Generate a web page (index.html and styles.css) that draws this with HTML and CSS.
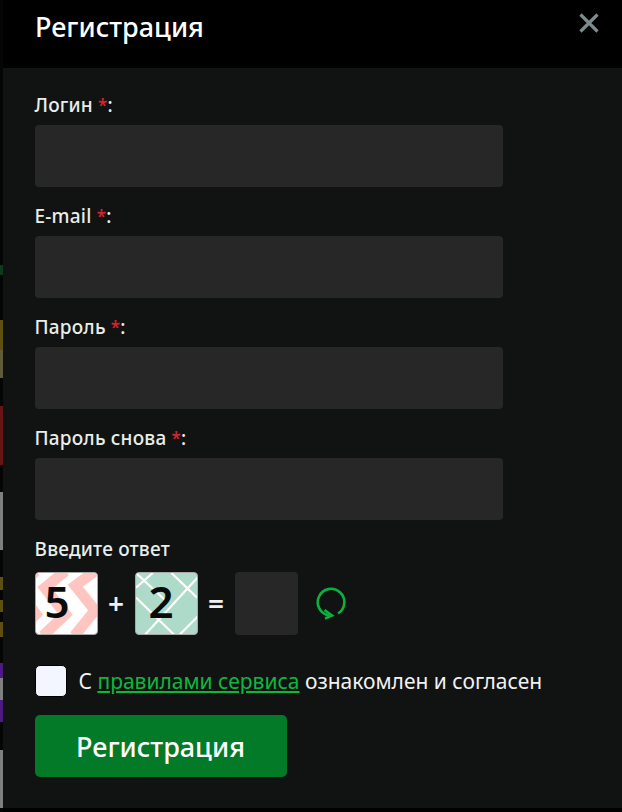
FILE: index.html
```html
<!DOCTYPE html>
<html lang="ru">
<head>
<meta charset="utf-8">
<title>Регистрация</title>
<link rel="stylesheet" href="styles.css">
</head>
<body>
<div class="page">
  <div class="strip">
    <i class="seg h265"></i><i class="seg h10 green"></i><i class="seg h45"></i><i class="seg h30 yellow"></i><i class="seg h28 gray-dim"></i><i class="seg h28"></i><i class="seg h59 red"></i><i class="seg h27"></i><i class="seg h58 gray"></i><i class="seg h27"></i><i class="seg h13 yellow"></i><i class="seg h10"></i><i class="seg h12 yellow"></i><i class="seg h10"></i><i class="seg h15 yellow"></i><i class="seg h26"></i><i class="seg h15 purple"></i><i class="seg h22 gray"></i><i class="seg h22 purple"></i><i class="seg h28"></i><i class="seg h58 gray"></i>
  </div>
  <div class="modal">
    <header class="head">
      <h1 class="title">Регистрация</h1>
      <svg class="close" viewBox="0 0 20 20" width="20" height="20"><path d="M1.500 1.500 18.500 18.500M18.500 1.500 1.500 18.500" stroke="#7d8b8d" stroke-width="3.200" fill="none"/></svg>
    </header>
    <form class="form">
      <div class="field"><label class="label">Логин <b class="req">*</b>:</label><div class="input"></div></div>
      <div class="field"><label class="label">E-mail <b class="req">*</b>:</label><div class="input"></div></div>
      <div class="field"><label class="label">Пароль <b class="req">*</b>:</label><div class="input"></div></div>
      <div class="field"><label class="label">Пароль снова <b class="req">*</b>:</label><div class="input"></div></div>
      <div class="label">Введите ответ</div>
      <div class="captcha">
        <div class="tile pink">
          <svg class="pat" viewBox="0 0 62 62"><path d="M60-2 40 13 60 38 39 64M30-2 9 15 30 42 7 64M0-2-20 15 0 42-22 64" fill="none" stroke="#ffc6c1" stroke-width="11"/></svg>
          <span class="digit shift-5">5</span>
        </div>
        <span class="op">+</span>
        <div class="tile mint">
          <svg class="pat" viewBox="0 0 62 62"><path d="M36 0 62 25M64 3 8 64M0 25 40 64M17 0 0 15M0 0 30 28M64 43 43 64" fill="none" stroke="#fff" stroke-width="2.200"/></svg>
          <span class="digit shift-2">2</span>
        </div>
        <span class="op">=</span>
        <div class="answer"></div>
        <svg class="reload" viewBox="0 0 32 34" width="32" height="34"><path d="M23 27.500A13.300 13.300 0 1 0 14 29.300" fill="none" stroke="#0bb13f" stroke-width="2.600"/><path d="M9.500 24 17 29.500 10 32.500" fill="none" stroke="#0bb13f" stroke-width="2.600"/></svg>
      </div>
      <div class="agree">
        <span class="check"></span>
        <span class="agree-text">С <a class="link" href="#">правилами сервиса</a> ознакомлен и согласен</span>
      </div>
      <button class="submit" type="button">Регистрация</button>
    </form>
  </div>
</div>
</body>
</html>
```
FILE: styles.css
```css
* { box-sizing: border-box; }
html, body { margin: 0; height: 100%; background: #000; }
body { font-family: "Noto Sans", "Open Sans", sans-serif; color: #f2f2f2; overflow: hidden; }
.page { display: flex; width: 622px; height: 812px; }

.strip { width: 3px; flex: none; display: flex; flex-direction: column; background: #050505; }
.seg { display: block; flex: none; }
.h10 { height: 10px; } .h12 { height: 12px; } .h13 { height: 13px; } .h15 { height: 15px; }
.h22 { height: 22px; } .h26 { height: 26px; } .h27 { height: 27px; } .h28 { height: 28px; }
.h30 { height: 30px; } .h45 { height: 45px; } .h58 { height: 58px; } .h59 { height: 59px; }
.h265 { height: 265px; }
.green { background: #0c3a1b; }
.yellow { background: #5e500e; }
.gray-dim { background: #5f5a3a; }
.red { background: #661416; }
.gray { background: #7f7f7f; }
.purple { background: #4c1a80; }

.modal { flex: 1; display: flex; flex-direction: column; height: 808px; background: #111313; }
.head { height: 68px; flex: none; background: #000; display: flex; justify-content: space-between; align-items: flex-start; padding: 13px 23px 0 32px; }
.title { margin: 0; font-size: 27px; line-height: 28px; font-weight: 500; color: #fff; }

.form { padding: 27px 0 0 31.500px; display: flex; flex-direction: column; }
.field { display: flex; flex-direction: column; margin-bottom: 19px; }
.label { font-size: 19px; letter-spacing: 0.200px; line-height: 20px; height: 30px; font-weight: 500; color: #e9eee9; }
.req { color: #d3232a; font-weight: 600; font-size: 17px; }
.input { width: 468px; height: 62px; background: #272727; border-radius: 4px; }

.captcha { display: flex; align-items: center; margin-top: 2px; height: 64px; }
.tile { position: relative; width: 63px; height: 63px; border-radius: 4px; border: 1px solid #a8a8a8; overflow: hidden; display: flex; align-items: center; justify-content: center; }
.pink { background: #fff; }
.mint { background: #aedbc9; }
.pat { position: absolute; inset: 0; width: 100%; height: 100%; }
.digit { position: relative; font-size: 44px; line-height: 1; font-weight: 600; color: #0b0b0b; margin-bottom: 4px; }
.shift-5 { margin-right: 18px; }
.shift-2 { margin-right: 10px; }
.op { width: 37px; text-align: center; font-size: 28px; font-weight: 600; color: #f0f0f0; }
.answer { width: 63px; height: 63px; background: #272727; border-radius: 4px; }
.reload { margin-left: 17px; }

.agree { display: flex; align-items: center; margin-top: 30px; }
.check { width: 32px; height: 32px; background: #f3f6fe; border-radius: 5px; border: 1px solid #000; }
.agree-text { margin-left: 12px; font-size: 21px; line-height: 28px; color: #f2f2f2; }
.link { color: #0cb83c; }
.submit { margin-top: 18px; width: 252px; height: 62px; border: 0; border-radius: 5px; background: #027a27; color: #fff; font: 500 27px "Noto Sans", sans-serif; }
```
